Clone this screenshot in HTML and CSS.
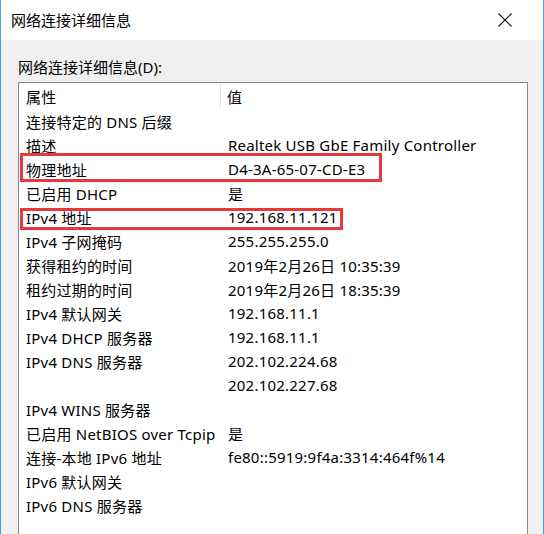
FILE: index.html
```html
<!DOCTYPE html>
<html lang="zh-CN">
<head>
<meta charset="utf-8">
<title>网络连接详细信息</title>
<link rel="stylesheet" href="styles.css">
</head>
<body>
<div class="window">
  <div class="titlebar">
    <span class="title">网络连接详细信息</span>
    <span class="close">
      <svg width="14" height="14" viewBox="0 0 14 14"><path d="M0.5 0.5 L13.5 13.5 M13.5 0.5 L0.5 13.5" stroke="#111" stroke-width="1.1" fill="none"/></svg>
    </span>
  </div>
  <div class="content">
    <div class="label">网络连接详细信息(D):</div>
    <div class="list">
      <div class="row head"><div class="c1">属性</div><div class="c2">值</div></div>
      <div class="row"><div class="c1">连接特定的 DNS 后缀</div><div class="c2"></div></div>
      <div class="row"><div class="c1">描述</div><div class="c2">Realtek USB GbE Family Controller</div></div>
      <div class="row"><div class="c1">物理地址</div><div class="c2">D4-3A-65-07-CD-E3</div><span class="mark mark-mac"></span></div>
      <div class="row"><div class="c1">已启用 DHCP</div><div class="c2">是</div></div>
      <div class="row"><div class="c1">IPv4 地址</div><div class="c2">192.168.11.121</div><span class="mark mark-ip"></span></div>
      <div class="row"><div class="c1">IPv4 子网掩码</div><div class="c2">255.255.255.0</div></div>
      <div class="row"><div class="c1">获得租约的时间</div><div class="c2">2019年2月26日 10:35:39</div></div>
      <div class="row"><div class="c1">租约过期的时间</div><div class="c2">2019年2月26日 18:35:39</div></div>
      <div class="row"><div class="c1">IPv4 默认网关</div><div class="c2">192.168.11.1</div></div>
      <div class="row"><div class="c1">IPv4 DHCP 服务器</div><div class="c2">192.168.11.1</div></div>
      <div class="row"><div class="c1">IPv4 DNS 服务器</div><div class="c2">202.102.224.68</div></div>
      <div class="row"><div class="c1"></div><div class="c2">202.102.227.68</div></div>
      <div class="row"><div class="c1">IPv4 WINS 服务器</div><div class="c2"></div></div>
      <div class="row"><div class="c1">已启用 NetBIOS over Tcpip</div><div class="c2">是</div></div>
      <div class="row"><div class="c1">连接-本地 IPv6 地址</div><div class="c2">fe80::5919:9f4a:3314:464f%14</div></div>
      <div class="row"><div class="c1">IPv6 默认网关</div><div class="c2"></div></div>
      <div class="row"><div class="c1">IPv6 DNS 服务器</div><div class="c2"></div></div>
    </div>
  </div>
</div>
</body>
</html>
```

FILE: styles.css
```css
html, body {
  margin: 0;
  padding: 0;
  overflow: hidden;
}
body {
  font-family: "Noto Sans", "Noto Sans CJK SC", sans-serif;
  font-size: 15px;
  color: #000;
}
.window {
  width: 544px;
  height: 534px;
  box-sizing: border-box;
  border-left: 1px solid #4a9be0;
  border-right: 1px solid #4a9be0;
  background: #f0f0f0;
  display: flex;
  flex-direction: column;
  overflow: hidden;
}
.titlebar {
  height: 40px;
  flex: none;
  background: #fff;
  display: flex;
  align-items: center;
  justify-content: space-between;
  padding: 0 31px 0 10px;
}
.title {
  line-height: 20px;
}
.close {
  display: flex;
  width: 14px;
  height: 14px;
}
.content {
  flex: 1;
  padding: 17px 15px 0 17px;
  display: flex;
  flex-direction: column;
  min-height: 0;
}
.label {
  line-height: 20px;
  margin-bottom: 5px;
}
.list {
  flex: 1;
  background: #fff;
  border: 1px solid #828790;
  border-bottom: none;
  letter-spacing: 0.22px;
}
.row {
  position: relative;
  display: flex;
  height: 24px;
  align-items: center;
  white-space: nowrap;
}
.row.head {
  height: 26px;
}
.c1 {
  width: 202px;
  flex: none;
  padding-left: 7px;
  box-sizing: border-box;
  height: 100%;
  display: flex;
  align-items: center;
}
.c2 {
  padding-left: 7px;
  flex: 1;
}
.head .c1 {
  border-right: 1px solid #e5e5e5;
}
.head .c2 {
  padding-left: 6px;
}
.mark {
  position: absolute;
  left: 1px;
  border: 3px solid #e8383d;
  box-sizing: content-box;
}
.mark-mac {
  top: -4px;
  width: 356px;
  height: 23px;
}
.mark-ip {
  top: 3px;
  width: 317px;
  height: 16px;
}
```
